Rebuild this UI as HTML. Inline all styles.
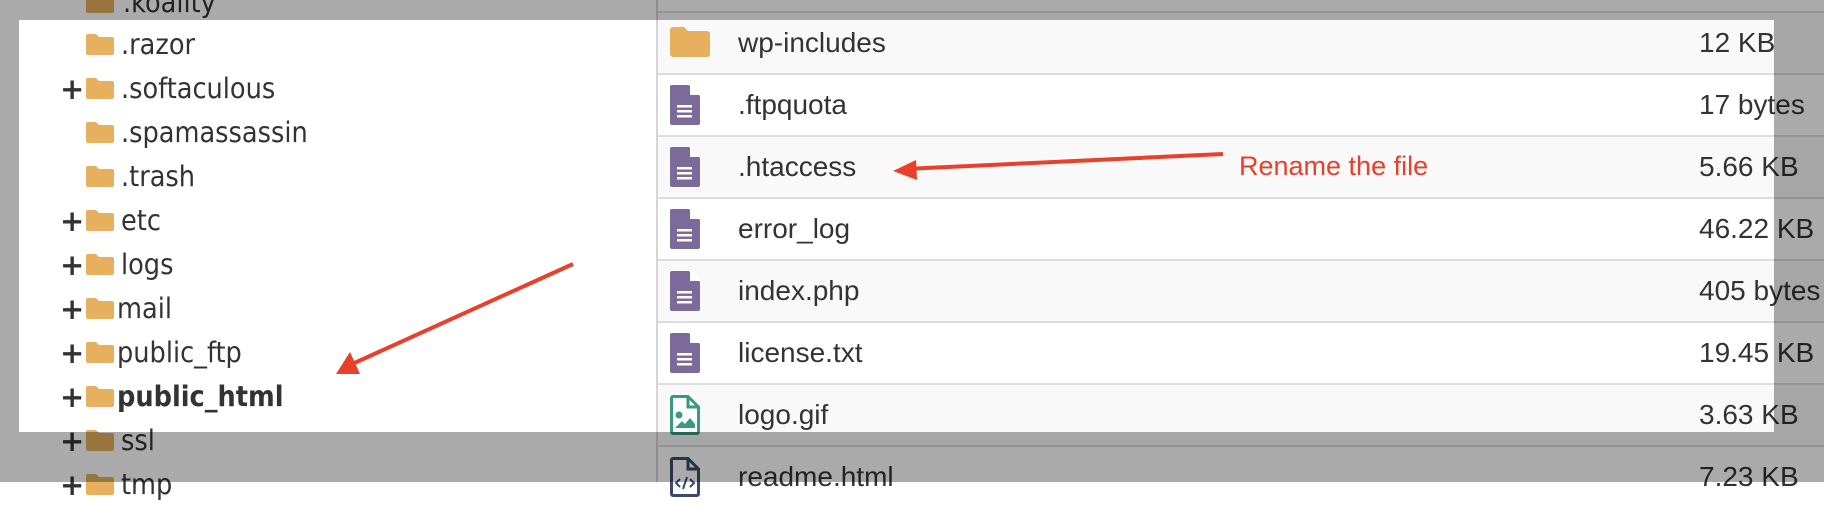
<!DOCTYPE html>
<html><head><meta charset="utf-8"><style>
*{margin:0;padding:0;box-sizing:border-box}
body{width:1824px;height:482px;overflow:hidden;position:relative;background:#fff;font-family:"Liberation Sans",sans-serif;color:#333}
.abs{position:absolute}
.tree{position:absolute;left:0;top:0;width:656px;height:482px;background:#fff}
.ti{position:absolute;height:30px;line-height:30px;font-family:"DejaVu Sans Condensed","DejaVu Sans",sans-serif;font-size:28.5px;color:#333;white-space:nowrap}
.plus{position:absolute;left:60px;font-family:"DejaVu Sans",sans-serif;font-weight:bold;font-size:29px;width:22px;text-align:center}
.tf{position:absolute;left:86px;width:28px;height:21px}
.right{position:absolute;left:656px;top:0;width:1168px;height:482px;border-left:2px solid #d5d5d5;background:#fff}
.row{position:absolute;left:0;width:1168px;height:62px;border-top:2px solid #ddd}
.row.g{background:#f9f9f9}
.nm{position:absolute;left:80px;top:0;line-height:60px;font-size:28px}
.sz{position:absolute;left:1041px;top:0;line-height:60px;font-size:28px;white-space:nowrap}
.ic{position:absolute;left:12px;top:10px}
.ov{position:absolute;background:rgba(0,0,0,0.335)}
</style></head><body>
<div class="tree">
<svg width="0" height="0" style="position:absolute"><defs>
<symbol id="fold" viewBox="0 0 28 21"><path d="M2 0h8l3 3h13a2 2 0 0 1 2 2v14a2 2 0 0 1-2 2H2a2 2 0 0 1-2-2V2a2 2 0 0 1 2-2z" fill="#e6b05e"/></symbol>
<symbol id="doc" viewBox="0 0 30 40"><path d="M2 0h17l11 11v27a2 2 0 0 1-2 2H2a2 2 0 0 1-2-2V2a2 2 0 0 1 2-2z" fill="#7b6a9a"/><path d="M20 0l10 10h-10z" fill="#fff"/><rect x="7" y="20" width="15" height="2.5" fill="#fff"/><rect x="7" y="25" width="15" height="2.5" fill="#fff"/><rect x="7" y="30" width="15" height="2.5" fill="#fff"/></symbol>
</defs></svg>
<div class="ti" style="top:-12px;left:86px"><svg class="tf" style="left:0;top:4px" width="28" height="21"><use href="#fold"/></svg><span style="position:absolute;left:37px">.koality</span></div>
</div>
<div class="right">
<div class="row g" style="top:11px"><svg class="ic" style="top:14px" width="40" height="30" viewBox="0 0 40 30"><path d="M3 0h11l4 4h19a3 3 0 0 1 3 3v20a3 3 0 0 1-3 3H3a3 3 0 0 1-3-3V3a3 3 0 0 1 3-3z" fill="#e6b05e"/></svg><div class="nm">wp-includes</div><div class="sz">12 KB</div></div>
<div class="row" style="top:73px"><svg class="ic" width="30" height="40"><use href="#doc"/></svg><div class="nm">.ftpquota</div><div class="sz">17 bytes</div></div>
<div class="row g" style="top:135px"><svg class="ic" width="30" height="40"><use href="#doc"/></svg><div class="nm">.htaccess</div><div class="sz">5.66 KB</div></div>
<div class="row" style="top:197px"><svg class="ic" width="30" height="40"><use href="#doc"/></svg><div class="nm">error_log</div><div class="sz">46.22 KB</div></div>
<div class="row g" style="top:259px"><svg class="ic" width="30" height="40"><use href="#doc"/></svg><div class="nm">index.php</div><div class="sz">405 bytes</div></div>
<div class="row" style="top:321px"><svg class="ic" width="30" height="40"><use href="#doc"/></svg><div class="nm">license.txt</div><div class="sz">19.45 KB</div></div>
<div class="row g" style="top:383px"><svg class="ic" width="30" height="40" viewBox="0 0 30 40"><path d="M3 1.5h15l10.5 10.5v25a1.5 1.5 0 0 1-1.5 1.5H3A1.5 1.5 0 0 1 1.5 37V3A1.5 1.5 0 0 1 3 1.5z" fill="#fff" stroke="#3a9a80" stroke-width="3"/><path d="M18 1.5v10.5h10.5" fill="none" stroke="#3a9a80" stroke-width="3"/><circle cx="9" cy="20" r="3.5" fill="#3a9a80"/><path d="M5 33l7-7 3 3 5-6 5 6v4H5z" fill="#3a9a80"/></svg><div class="nm">logo.gif</div><div class="sz">3.63 KB</div></div>
<div class="row" style="top:445px"><svg class="ic" width="30" height="40" viewBox="0 0 30 40"><path d="M3 1.5h15l10.5 10.5v25a1.5 1.5 0 0 1-1.5 1.5H3A1.5 1.5 0 0 1 1.5 37V3A1.5 1.5 0 0 1 3 1.5z" fill="#fff" stroke="#3b4a6b" stroke-width="3"/><path d="M18 1.5v10.5h10.5" fill="none" stroke="#3b4a6b" stroke-width="3"/><path d="M10 22l-4 4 4 4M20 22l4 4-4 4M17 20l-4 12" fill="none" stroke="#3b4a6b" stroke-width="2"/></svg><div class="nm">readme.html</div><div class="sz">7.23 KB</div></div>
</div>

<div class="ti" style="top:30px;left:0;width:400px"><svg class="tf" style="top:4px" width="28" height="21"><use href="#fold"/></svg><span style="position:absolute;left:121px">.razor</span></div>
<div class="ti" style="top:74px;left:0;width:400px"><span class="plus">+</span><svg class="tf" style="top:4px" width="28" height="21"><use href="#fold"/></svg><span style="position:absolute;left:121px">.softaculous</span></div>
<div class="ti" style="top:118px;left:0;width:400px"><svg class="tf" style="top:4px" width="28" height="21"><use href="#fold"/></svg><span style="position:absolute;left:121px">.spamassassin</span></div>
<div class="ti" style="top:162px;left:0;width:400px"><svg class="tf" style="top:4px" width="28" height="21"><use href="#fold"/></svg><span style="position:absolute;left:121px">.trash</span></div>
<div class="ti" style="top:206px;left:0;width:400px"><span class="plus">+</span><svg class="tf" style="top:4px" width="28" height="21"><use href="#fold"/></svg><span style="position:absolute;left:121px">etc</span></div>
<div class="ti" style="top:250px;left:0;width:400px"><span class="plus">+</span><svg class="tf" style="top:4px" width="28" height="21"><use href="#fold"/></svg><span style="position:absolute;left:121px">logs</span></div>
<div class="ti" style="top:294px;left:0;width:400px"><span class="plus">+</span><svg class="tf" style="top:4px" width="28" height="21"><use href="#fold"/></svg><span style="position:absolute;left:117px">mail</span></div>
<div class="ti" style="top:338px;left:0;width:400px"><span class="plus">+</span><svg class="tf" style="top:4px" width="28" height="21"><use href="#fold"/></svg><span style="position:absolute;left:117px">public_ftp</span></div>
<div class="ti" style="top:382px;left:0;width:400px"><span class="plus">+</span><svg class="tf" style="top:4px" width="28" height="21"><use href="#fold"/></svg><span style="position:absolute;left:117px;font-weight:bold">public_html</span></div>
<div class="ti" style="top:426px;left:0;width:400px"><span class="plus">+</span><svg class="tf" style="top:4px" width="28" height="21"><use href="#fold"/></svg><span style="position:absolute;left:121px">ssl</span></div>
<div class="ti" style="top:470px;left:0;width:400px"><span class="plus">+</span><svg class="tf" style="top:4px" width="28" height="21"><use href="#fold"/></svg><span style="position:absolute;left:121px">tmp</span></div>

<div class="abs" style="left:1239px;top:151px;font-size:27px;color:#e8402a;line-height:30px;white-space:nowrap">Rename the file</div>
<svg class="abs" style="left:0;top:0" width="1824" height="482">
<line x1="1223" y1="154" x2="905" y2="169" stroke="#e8402a" stroke-width="4"/>
<path d="M893 171L916 160L917 180Z" fill="#e8402a"/>
<line x1="573" y1="264" x2="350" y2="365" stroke="#e8402a" stroke-width="4"/>
<path d="M336 374L350 352L360 374Z" fill="#e8402a"/>
</svg>

<div class="ov" style="left:0;top:0;width:1824px;height:20px"></div>
<div class="ov" style="left:0;top:432px;width:1824px;height:50px"></div>
<div class="ov" style="left:0;top:20px;width:19px;height:412px"></div>
<div class="ov" style="left:1774px;top:20px;width:50px;height:412px"></div>
</body></html>
